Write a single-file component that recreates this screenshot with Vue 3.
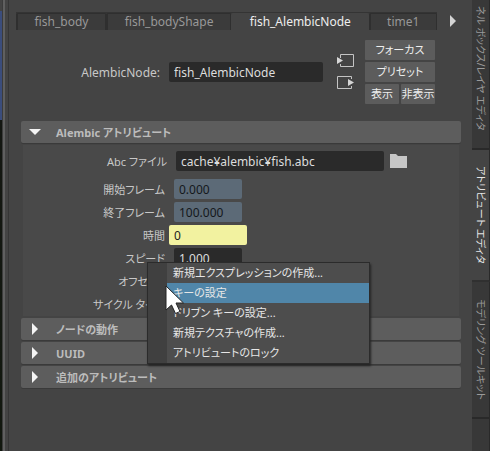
<script setup>
import { ref } from 'vue'

const tabs = ['fish_body', 'fish_bodyShape', 'fish_AlembicNode', 'time1']
const activeTab = ref('fish_AlembicNode')
const nodeName = ref('fish_AlembicNode')
const abcFile = ref('cache¥alembic¥fish.abc')

const attributes = ref([
  { id: 'start', label: '開始フレーム', value: '0.000', kind: 'linked' },
  { id: 'end', label: '終了フレーム', value: '100.000', kind: 'linked' },
  { id: 'time', label: '時間', value: '0', kind: 'driven' },
  { id: 'speed', label: 'スピード', value: '1.000', kind: 'plain' },
  { id: 'offset', label: 'オフセット', value: '', kind: 'plain' },
  { id: 'cycle', label: 'サイクル タイプ', value: '', kind: 'plain' },
])

const collapsed = ['ノードの動作', 'UUID', '追加のアトリビュート']
const menuItems = [
  '新規エクスプレッションの作成...',
  'キーの設定',
  'ドリブン キーの設定...',
  '新規テクスチャの作成...',
  'アトリビュートのロック',
]
const hovered = ref(1)
</script>

<template>
  <div class="window">
    <div class="viewport"><div class="sky"></div></div>
    <div class="splitter"></div>

    <main class="panel">
      <nav class="tabs">
        <div class="tab-list">
          <button
            v-for="tab in tabs"
            :key="tab"
            class="tab"
            :class="{ active: tab === activeTab }"
            @click="activeTab = tab"
          >{{ tab }}</button>
        </div>
        <button class="next" aria-label="次のタブ">
          <svg width="6" height="12" viewBox="0 0 6 12"><path d="M0 0L6 6L0 12Z" fill="#d4d4d4" /></svg>
        </button>
      </nav>

      <header class="node">
        <label class="node-label" for="node-name">AlembicNode:</label>
        <input id="node-name" v-model="nodeName" class="field node-field" />
        <div class="links">
          <button class="icon" aria-label="入力接続">
            <svg width="18" height="16" viewBox="0 0 18 16">
              <path d="M3.5 5V1.5H16.5V13.5H3.5V11" fill="none" stroke="#c4c4c4" />
              <path d="M0 4L6 7.5L0 11Z" fill="#d6d6d6" />
            </svg>
          </button>
          <button class="icon" aria-label="出力接続">
            <svg width="18" height="16" viewBox="0 0 18 16">
              <path d="M14.5 4V1.5H0.5V13.5H14.5V11" fill="none" stroke="#c4c4c4" />
              <path d="M11 4L17 7.5L11 11Z" fill="#d6d6d6" />
            </svg>
          </button>
        </div>
        <div class="actions">
          <button class="action wide">フォーカス</button>
          <button class="action wide">プリセット</button>
          <button class="action">表示</button>
          <button class="action">非表示</button>
        </div>
      </header>

      <section class="sections">
        <button class="bar">
          <svg class="arrow" width="12" height="12" viewBox="0 0 12 12"><path d="M0 3H12L6 9Z" fill="#f4f4f4" /></svg>
          <span>Alembic アトリビュート</span>
        </button>
        <div class="body">
          <div class="row file">
            <label class="label" for="abc">Abc ファイル</label>
            <input id="abc" v-model="abcFile" class="field file-field" />
            <button class="icon" aria-label="参照">
              <svg width="17" height="14" viewBox="0 0 17 14"><path d="M0 0H6L8 2H17V14H0Z" fill="#c6c6c6" /></svg>
            </button>
          </div>
          <div v-for="a in attributes" :key="a.id" class="row" :class="a.kind">
            <label class="label" :for="a.id">{{ a.label }}</label>
            <input :id="a.id" v-model="a.value" class="field value" />
          </div>
        </div>
        <button v-for="name in collapsed" :key="name" class="bar">
          <svg class="arrow" width="12" height="12" viewBox="0 0 12 12"><path d="M3 0L9 6L3 12Z" fill="#f4f4f4" /></svg>
          <span>{{ name }}</span>
        </button>

        <div class="menu" role="menu">
          <button
            v-for="(item, i) in menuItems"
            :key="item"
            class="item"
            :class="{ hot: i === hovered }"
            role="menuitem"
            @mouseenter="hovered = i"
          >{{ item }}</button>
          <svg class="pointer" width="20" height="30" viewBox="0 0 20 30">
            <path d="M1 1V25L6.500 20L10.500 28.500L15 26.500L11 18H18.500Z" fill="#fff" stroke="#242424" />
          </svg>
        </div>
      </section>
    </main>

    <aside class="side">
      <button class="side-tab first"><span>ネル ボックス/レイヤ エディタ</span></button>
      <button class="side-tab current"><span>アトリビュート エディタ</span></button>
      <button class="side-tab last"><span>モデリング ツールキット</span></button>
      <div class="side-rest"></div>
    </aside>
  </div>
</template>

<style>
body {
  background: #444;
}
</style>

<style scoped>
.window {
  display: flex;
  min-height: 100vh;
  background: #444;
  color: #c8c8c8;
  font-family: "Noto Sans", "Noto Sans CJK JP", sans-serif;
  font-size: 12px;
  font-feature-settings: "palt";
  overflow: hidden;
}
button,
input {
  box-sizing: border-box;
  margin: 0;
  padding: 0;
  border: 0;
  background: none;
  color: inherit;
  font: inherit;
  font-feature-settings: inherit;
  outline: none;
}
svg {
  display: block;
}
.viewport {
  width: 2px;
  background: linear-gradient(#241d18, #30271f 80px, #141712 120px, #12180f);
}
.sky {
  height: 120px;
  background: linear-gradient(#444 11px, #3b4d7c 11px);
}
.splitter {
  box-sizing: border-box;
  width: 6px;
  background: #606060;
  border-left: 1px solid #3c3c3c;
  border-right: 3px solid #444;
}
.panel {
  flex: 1;
  min-width: 0;
  border-left: 1px solid #363636;
  padding-top: 12px;
}
.tabs {
  display: flex;
  align-items: center;
  justify-content: space-between;
  margin: 0 16px 0 7px;
}
.tab-list {
  display: flex;
  flex: 1;
  max-width: 421px;
  background: #393939;
  border-top: 1px solid #343434;
}
.tab {
  flex: 1 1 auto;
  height: 17px;
  padding: 0 10px;
  border: 1px solid #2f2f2f;
  border-width: 1px 1px 0 2px;
  border-radius: 2px 2px 0 0;
  background: #3b3b3b;
  color: #989898;
  line-height: 16px;
  white-space: nowrap;
}
.tab.active {
  border-color: #444;
  background: #444;
  color: #eee;
}
.node {
  display: flex;
  align-items: center;
  margin: 10px 37px 0 0;
  height: 64px;
}
.node-label {
  width: 151px;
  margin-right: 9px;
  text-align: right;
}
.field {
  height: 20px;
  padding: 0 5px;
  border-radius: 2px;
  background: #2a2a2a;
  color: #ddd;
  min-width: 0;
}
.node-field {
  flex: 1;
}
.links {
  display: grid;
  gap: 6px;
  margin: 0 10px 0 14px;
}
.actions {
  display: grid;
  grid-template-columns: 34px 34px;
  gap: 2px;
}
.action {
  height: 20px;
  border-radius: 1px;
  background: #5c5c5c;
  color: #eee;
  font-size: 11px;
  line-height: 20px;
  white-space: nowrap;
}
.wide {
  grid-column: span 2;
}
.sections {
  position: relative;
  display: grid;
  gap: 2px;
  margin: 17px 11px 0 12px;
}
.bar {
  display: flex;
  align-items: center;
  gap: 15px;
  height: 22px;
  padding-left: 8px;
  border-radius: 2px;
  background: #5d5d5d;
  box-shadow: 0 1px 0 #3a3a3a;
  color: #bcbcbc;
  font-size: 11px;
  font-weight: bold;
  white-space: nowrap;
}
.body {
  display: grid;
  gap: 3px;
  margin: 0 2px;
  padding: 6px 0 2px;
  background: #494949;
}
.row {
  display: flex;
  align-items: center;
  height: 20px;
}
.label {
  width: 142px;
  margin-right: 9px;
  font-size: 11px;
  text-align: right;
  white-space: nowrap;
}
.file {
  margin-bottom: 5px;
}
.file .label {
  width: 144px;
}
.file-field {
  flex: 1;
  margin-right: 6px;
}
.file .icon {
  margin-right: 52px;
}
.value {
  width: 68px;
}
.linked .value {
  background: #5c6a77;
  color: #14181c;
}
.driven .label {
  margin-right: 4px;
}
.driven .value {
  width: 78px;
  background: #f2f2a0;
  color: #222;
}
.menu {
  position: absolute;
  left: 126px;
  top: 141px;
  width: 223px;
  box-sizing: border-box;
  border: 1px solid #2b2b2b;
  background: #4d4d4d;
  box-shadow: 1px 2px 2px #252525;
}
.item {
  display: block;
  width: 100%;
  height: 20px;
  padding-left: 6px;
  border-left: 19px solid #404040;
  color: #e6e6e6;
  font-size: 11px;
  text-align: left;
  line-height: 20px;
  white-space: nowrap;
}
.item.hot {
  background: #5086a9;
  background-clip: padding-box;
}
.pointer {
  position: absolute;
  left: 17px;
  top: 22px;
}
.side {
  display: flex;
  flex-direction: column;
  width: 18px;
  background: #383838;
}
.side-tab {
  display: flex;
  align-items: center;
  justify-content: center;
  width: 18px;
  box-sizing: border-box;
  border-right: 1px solid #292929;
  border-bottom: 2px solid #292929;
  color: #9a9a9a;
  font-size: 10px;
}
.side-tab span {
  writing-mode: vertical-rl;
  text-orientation: sideways;
  line-height: 17px;
  white-space: nowrap;
}
.first {
  height: 150px;
  align-items: flex-end;
  padding-bottom: 17px;
}
.current {
  height: 132px;
  background: #444;
  color: #e4e4e4;
  border-bottom-color: #303030;
}
.last {
  height: 137px;
}
.side-rest {
  flex: 1;
  border-right: 1px solid #292929;
}
</style>
